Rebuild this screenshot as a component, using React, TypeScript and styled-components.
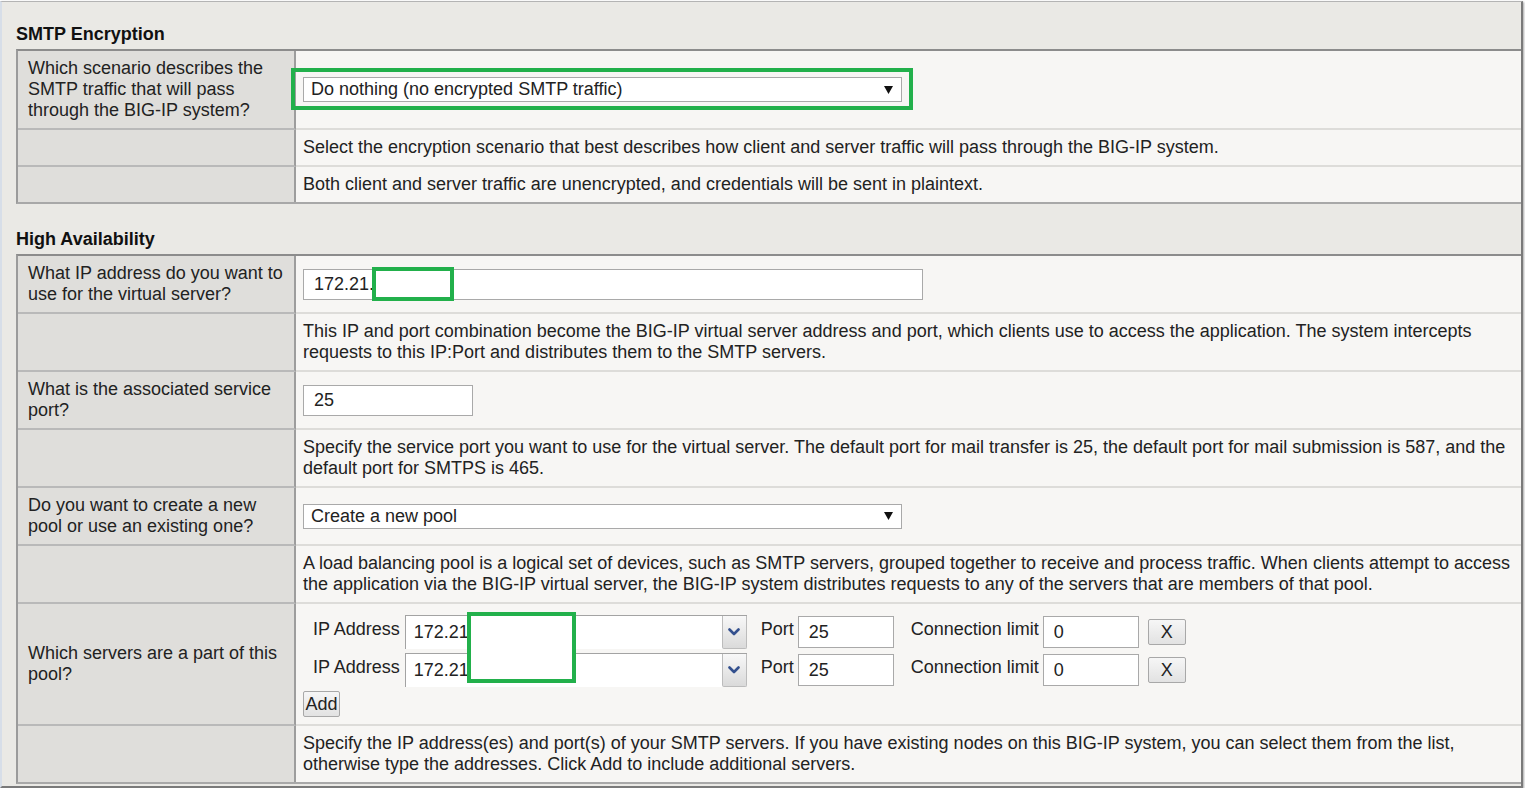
import React from "react";
import styled, { createGlobalStyle } from "styled-components";

const GlobalStyle = createGlobalStyle`
  html, body {
    margin: 0;
    padding: 0;
    background: #ffffff;
  }
  body {
    font-family: "Liberation Sans", Arial, Helvetica, sans-serif;
    font-size: 18px;
    color: #222;
  }
  * {
    box-sizing: border-box;
  }
`;

const Frame = styled.div`
  width: 1523px;
  margin-top: 1px;
  padding: 0 0 2px 14px;
  background: #eae9e5;
  border-top: 1px solid #b4b4b4;
  border-left: 2px solid #d7dee8;
  border-right: 2px solid #7a7a7a;
  border-bottom: 2px solid #7a7a7a;
  box-shadow: 1px 1px 2px rgba(0, 0, 0, 0.35);
`;

const SectionTitle = styled.h2<{ $top: number; $bottom: number }>`
  margin: 0;
  padding: ${(p) => p.$top}px 0 ${(p) => p.$bottom}px 0;
  font-size: 18px;
  line-height: 22px;
  font-weight: bold;
  color: #111;
`;

const FormTable = styled.div`
  border-top: 2px solid #8c8c8c;
  border-left: 2px solid #9b9b9b;
  border-bottom: 2px solid #a8a8a8;
`;

const Row = styled.div`
  display: grid;
  grid-template-columns: 278px 1fr;

  &:last-child > div {
    border-bottom: none;
  }
`;

const LabelCell = styled.div`
  display: flex;
  align-items: center;
  padding: 7px 6px 7px 10px;
  background: #dfdedb;
  border-right: 2px solid #9d9d9d;
  border-bottom: 2px solid #b9b9b9;
  line-height: 21px;
`;

const ValueCell = styled.div`
  display: flex;
  flex-direction: column;
  justify-content: center;
  align-items: flex-start;
  min-width: 0;
  padding: 7px 6px 7px 7px;
  background: #f7f6f4;
  border-bottom: 2px solid #dddcd9;
  line-height: 21px;
`;

const Anchor = styled.div`
  position: relative;
`;

const Highlight = styled.div<{
  $l: number;
  $t: number;
  $w: number;
  $h: number;
  $fill?: boolean;
}>`
  position: absolute;
  left: ${(p) => p.$l}px;
  top: ${(p) => p.$t}px;
  width: ${(p) => p.$w}px;
  height: ${(p) => p.$h}px;
  border: 4px solid #22b04b;
  background: ${(p) => (p.$fill ? "#ffffff" : "transparent")};
  pointer-events: none;
`;

const SelectBox = styled.div`
  display: flex;
  align-items: center;
  justify-content: space-between;
  width: 599px;
  height: 25px;
  padding: 0 8px 0 7px;
  background: #fff;
  border: 1px solid #a9a9a9;
  line-height: 23px;
`;

const TextInput = styled.input<{ $w: number; $h: number; $ml?: number; $mt?: number }>`
  display: block;
  width: ${(p) => p.$w}px;
  height: ${(p) => p.$h}px;
  margin: ${(p) => p.$mt ?? 0}px 0 0 ${(p) => p.$ml ?? 0}px;
  padding: 0 0 0 10px;
  background: #fff;
  border: 1px solid #a9a9a9;
  border-radius: 0;
  outline: none;
  font-family: inherit;
  font-size: 18px;
  color: #222;
`;

const ServerList = styled.div`
  position: relative;
  padding-top: 4px;
`;

const ServerRow = styled.div`
  display: flex;
  align-items: flex-start;
  height: 34px;
  margin-bottom: 4px;
`;

const FieldLabel = styled.span<{ $ml: number }>`
  margin: 4px 0 0 ${(p) => p.$ml}px;
  line-height: 21px;
  white-space: nowrap;
`;

const Combo = styled.div`
  display: flex;
  width: 342px;
  height: 34px;
  margin-left: 5px;
  background: #fff;
  border-top: 1px solid #a3a3a3;
  border-left: 1px solid #a3a3a3;
`;

const ComboValue = styled.span`
  flex: 1;
  padding-left: 8px;
  line-height: 33px;
`;

const ComboButton = styled.span`
  display: flex;
  align-items: center;
  justify-content: center;
  width: 25px;
  height: 33px;
  background: linear-gradient(#f8f8f8, #dadada);
  border: 1px solid #bcbcbc;
  border-top: none;
  border-radius: 0 0 2px 2px;
`;

const PushButton = styled.button<{ $w: number; $h: number; $ml?: number; $mt?: number }>`
  width: ${(p) => p.$w}px;
  height: ${(p) => p.$h}px;
  margin: ${(p) => p.$mt ?? 0}px 0 0 ${(p) => p.$ml ?? 0}px;
  padding: 0;
  background: linear-gradient(#f6f6f6, #e2e2e2);
  border: 1px solid #a8a8a8;
  border-radius: 2px;
  font-family: inherit;
  font-size: 18px;
  color: #222;
  line-height: 20px;
`;

const DownTriangle = () => (
  <svg width="9" height="8" viewBox="0 0 9 8">
    <path d="M0 0 H9 L4.5 8 Z" fill="#111" />
  </svg>
);

const Chevron = () => (
  <svg width="12" height="8" viewBox="0 0 12 8">
    <path
      d="M1.5 1.5 L6 6 L10.5 1.5"
      fill="none"
      stroke="#33508e"
      strokeWidth="2.6"
      strokeLinecap="round"
      strokeLinejoin="round"
    />
  </svg>
);

function ServerEntry() {
  return (
    <ServerRow>
      <FieldLabel $ml={10}>IP Address</FieldLabel>
      <Combo>
        <ComboValue>172.21</ComboValue>
        <ComboButton>
          <Chevron />
        </ComboButton>
      </Combo>
      <FieldLabel $ml={14}>Port</FieldLabel>
      <TextInput $w={96} $h={32} $ml={4} $mt={1} defaultValue="25" />
      <FieldLabel $ml={17}>Connection limit</FieldLabel>
      <TextInput $w={96} $h={32} $ml={4} $mt={1} defaultValue="0" />
      <PushButton $w={38} $h={26} $ml={9} $mt={4}>
        X
      </PushButton>
    </ServerRow>
  );
}

export default function App() {
  return (
    <>
      <GlobalStyle />
      <Frame>
        <SectionTitle $top={21} $bottom={4}>SMTP Encryption</SectionTitle>
        <FormTable>
          <Row>
            <LabelCell>
              Which scenario describes the SMTP traffic that will pass through
              the BIG-IP system?
            </LabelCell>
            <ValueCell>
              <Anchor>
                <SelectBox>
                  <span>Do nothing (no encrypted SMTP traffic)</span>
                  <DownTriangle />
                </SelectBox>
                <Highlight $l={-12} $t={-9} $w={622} $h={42} />
              </Anchor>
            </ValueCell>
          </Row>
          <Row>
            <LabelCell />
            <ValueCell>
              Select the encryption scenario that best describes how client and
              server traffic will pass through the BIG-IP system.
            </ValueCell>
          </Row>
          <Row>
            <LabelCell />
            <ValueCell>
              Both client and server traffic are unencrypted, and credentials
              will be sent in plaintext.
            </ValueCell>
          </Row>
        </FormTable>

        <SectionTitle $top={24} $bottom={4}>High Availability</SectionTitle>
        <FormTable>
          <Row>
            <LabelCell>What IP address do you want to use for the virtual server?</LabelCell>
            <ValueCell>
              <Anchor>
                <TextInput $w={620} $h={31} defaultValue="172.21." />
                <Highlight $l={69} $t={-2} $w={82} $h={34} $fill />
              </Anchor>
            </ValueCell>
          </Row>
          <Row>
            <LabelCell />
            <ValueCell>
              This IP and port combination become the BIG-IP virtual server
              address and port, which clients use to access the application. The
              system intercepts requests to this IP:Port and distributes them to
              the SMTP servers.
            </ValueCell>
          </Row>
          <Row>
            <LabelCell>What is the associated service port?</LabelCell>
            <ValueCell>
              <TextInput $w={170} $h={31} defaultValue="25" />
            </ValueCell>
          </Row>
          <Row>
            <LabelCell />
            <ValueCell>
              Specify the service port you want to use for the virtual server.
              The default port for mail transfer is 25, the default port for
              mail submission is 587, and the default port for SMTPS is 465.
            </ValueCell>
          </Row>
          <Row>
            <LabelCell>Do you want to create a new pool or use an existing one?</LabelCell>
            <ValueCell>
              <SelectBox>
                <span>Create a new pool</span>
                <DownTriangle />
              </SelectBox>
            </ValueCell>
          </Row>
          <Row>
            <LabelCell />
            <ValueCell>
              A load balancing pool is a logical set of devices, such as SMTP
              servers, grouped together to receive and process traffic. When
              clients attempt to access the application via the BIG-IP virtual
              server, the BIG-IP system distributes requests to any of the
              servers that are members of that pool.
            </ValueCell>
          </Row>
          <Row>
            <LabelCell>Which servers are a part of this pool?</LabelCell>
            <ValueCell>
              <ServerList>
                <ServerEntry />
                <ServerEntry />
                <PushButton $w={37} $h={26}>
                  Add
                </PushButton>
                <Highlight $l={164} $t={1} $w={109} $h={71} $fill />
              </ServerList>
            </ValueCell>
          </Row>
          <Row>
            <LabelCell />
            <ValueCell>
              Specify the IP address(es) and port(s) of your SMTP servers. If
              you have existing nodes on this BIG-IP system, you can select them
              from the list, otherwise type the addresses. Click Add to include
              additional servers.
            </ValueCell>
          </Row>
        </FormTable>
      </Frame>
    </>
  );
}
